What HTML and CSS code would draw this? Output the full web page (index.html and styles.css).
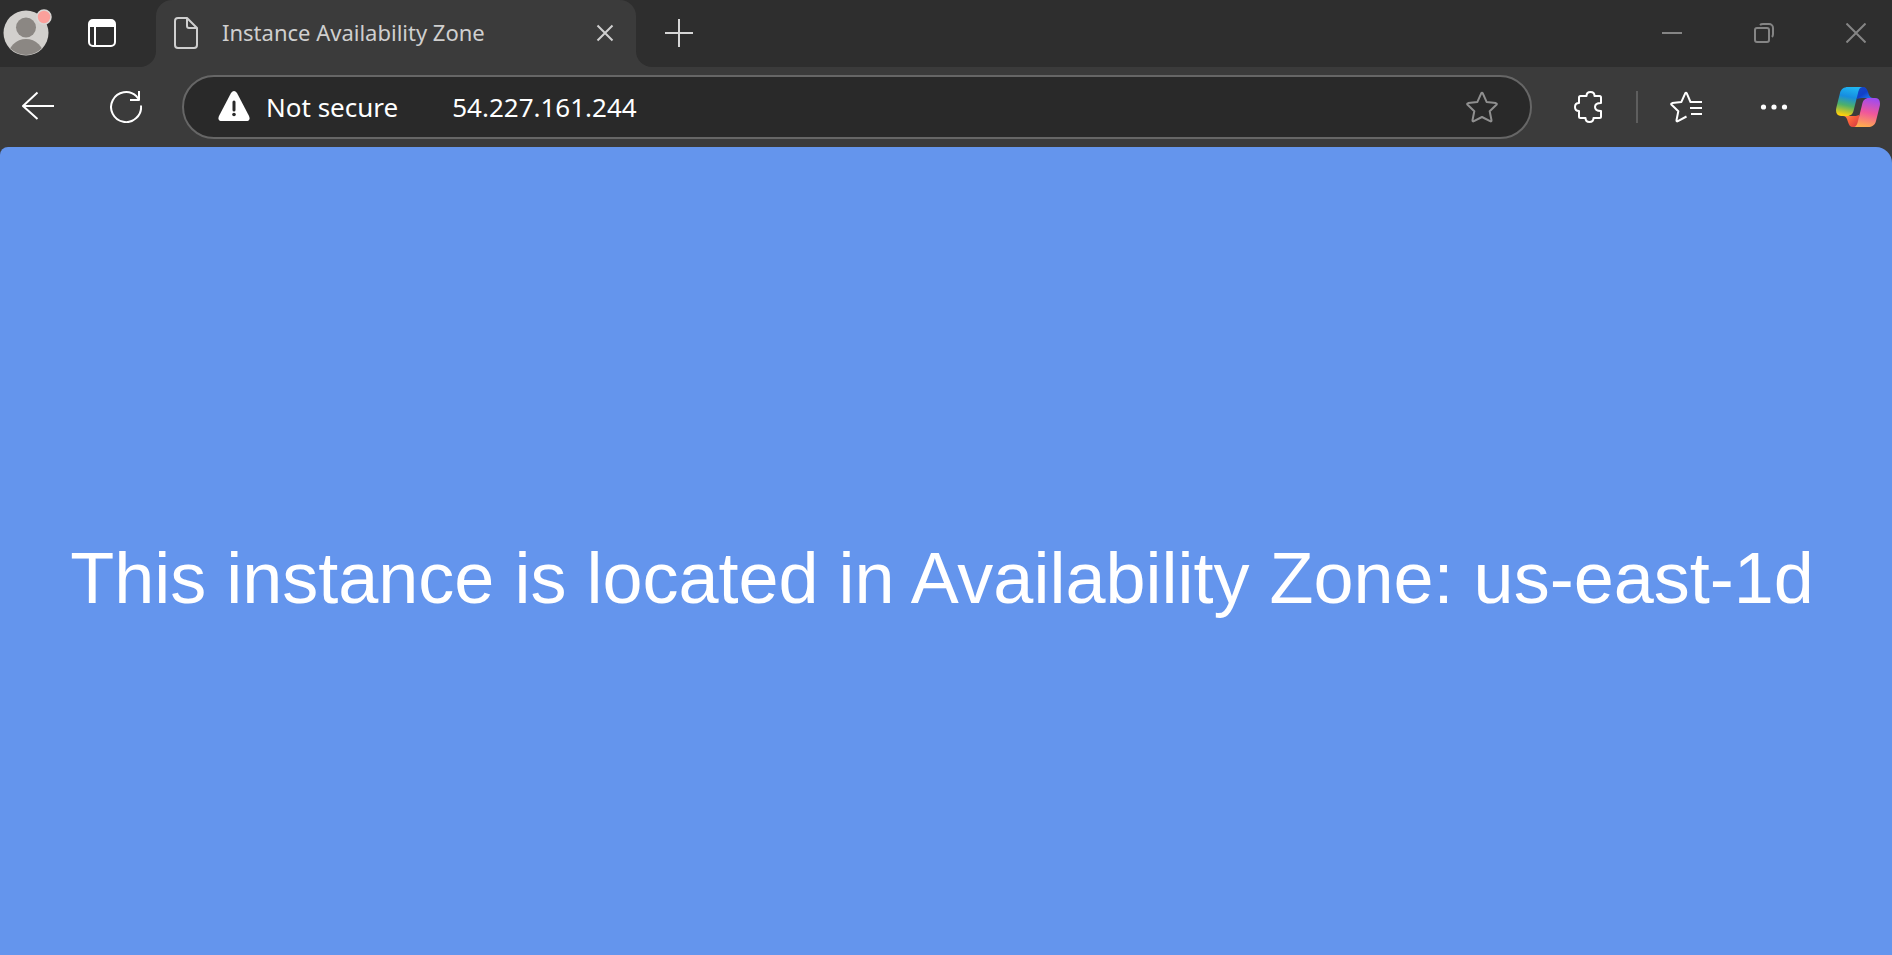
FILE: index.html
```html
<!DOCTYPE html>
<html lang="en">
<head>
<meta charset="utf-8">
<title>Instance Availability Zone</title>
<link rel="stylesheet" href="styles.css">
</head>
<body>
<header class="browser">
  <div class="tab-strip">
    <div class="strip-start">
      <button class="icon-button" aria-label="Profile">
        <svg width="50" height="50" viewBox="0 0 50 50">
          <defs><clipPath id="avatar"><circle cx="23" cy="25" r="22"/></clipPath></defs>
          <circle cx="23" cy="25" r="22.500" fill="#d2d0cd"/>
          <g clip-path="url(#avatar)" fill="#8b8783"><circle cx="23" cy="19.500" r="10"/><circle cx="23" cy="49" r="18"/></g>
          <circle cx="41" cy="9" r="7" fill="#fba09b" stroke="#d9d7d5" stroke-width="1.500"/>
        </svg>
      </button>
      <button class="icon-button" aria-label="Tab actions">
        <svg width="28" height="28" viewBox="0 0 28 28">
          <rect x="1" y="1" width="26" height="26" rx="4" fill="none" stroke="#fff" stroke-width="2"/>
          <path d="M1 8V5a4 4 0 0 1 4-4h18a4 4 0 0 1 4 4v3Z" fill="#fff"/>
          <path d="M7 8v18" stroke="#fff" stroke-width="2"/>
        </svg>
      </button>
    </div>
    <div class="tab-slot">
      <div class="tab">
        <svg class="line-icon" width="24" height="32" viewBox="0 0 24 32"><path d="M13 1H4a3 3 0 0 0-3 3v24a3 3 0 0 0 3 3h16a3 3 0 0 0 3-3V11L13 1v8a2 2 0 0 0 2 2h8"/></svg>
        <span class="tab-title">Instance Availability Zone</span>
        <button class="icon-button" aria-label="Close tab"><svg class="line-icon" width="18" height="18" viewBox="0 0 18 18"><path d="M1.500 1.500l15 15M16.500 1.500l-15 15"/></svg></button>
      </div>
    </div>
    <div class="strip-end">
      <button class="icon-button" aria-label="New tab"><svg class="line-icon new-tab" width="28" height="28" viewBox="0 0 28 28"><path d="M14 0v28M0 14h28"/></svg></button>
      <div class="window-controls">
        <button class="window-button" aria-label="Minimize"><svg class="line-icon" width="20" height="20" viewBox="0 0 20 20"><path d="M0 10h20"/></svg></button>
        <button class="window-button" aria-label="Restore"><svg class="line-icon" width="20" height="20" viewBox="0 0 20 20"><rect x="1" y="5" width="14" height="14" rx="2"/><path d="M6 2q1-1 3-1h6a4 4 0 0 1 4 4v6q0 2-1 3"/></svg></button>
        <button class="window-button" aria-label="Close"><svg class="line-icon" width="20" height="20" viewBox="0 0 20 20"><path d="M.500.500l19 19M19.500.500l-19 19"/></svg></button>
      </div>
    </div>
  </div>
  <div class="toolbar">
    <div class="nav">
      <button class="icon-button" aria-label="Back"><svg class="line-icon" width="32" height="32" viewBox="0 0 32 32"><path d="M15.500 1.500L1 15l14.500 13M1 15h31"/></svg></button>
      <button class="icon-button" aria-label="Refresh"><svg class="line-icon" width="32" height="32" viewBox="0 0 32 32"><path d="M31 14.500A15 15 0 1 1 26.500 5.300L29 8.500M29 0v9h-9"/></svg></button>
    </div>
    <div class="address-bar">
      <button class="security">
        <svg width="32" height="32" viewBox="0 0 32 32"><path d="M13 2q3-4 6 0l12 23q2 5-3 5H4q-5 0-3-5Z" fill="#fff"/><path d="M16 11v8" stroke="#292929" stroke-width="3" stroke-linecap="round"/><circle cx="16" cy="23.500" r="1.800" fill="#292929"/></svg>
        Not secure
      </button>
      <input class="url" type="text" aria-label="Address" value="54.227.161.244">
      <button class="icon-button favorite" aria-label="Add to favorites"><svg class="line-icon" width="32" height="32" viewBox="0 0 32 32"><path d="M15.100 2.600q.900-1.600 1.800 0l3.700 8.300 9.200 1.200q1.700.400.600 1.700l-6.700 6.500 1.800 8.900q.100 1.700-1.400 1L16 26l-8.100 4.200q-1.500.700-1.400-1l1.800-8.900-6.700-6.500q-1.100-1.300.600-1.700l9.200-1.200Z"/></svg></button>
    </div>
    <button class="icon-button" aria-label="Extensions"><svg class="line-icon" width="32" height="32" viewBox="0 0 32 32"><path d="M7 12V6.500A1.500 1.500 0 0 1 8.500 5H14.500q0-4 4-4t4 4h5A1.500 1.500 0 0 1 29 6.500V12q-6 0-6 4t6 4v5.500a1.500 1.500 0 0 1-1.500 1.500H21.500q0 4-4 4t-4-4H8.500A1.500 1.500 0 0 1 7 25.500V20q-4 0-4-4t4-4Z"/></svg></button>
    <div class="tools">
      <span class="divider"></span>
      <button class="icon-button" aria-label="Favorites"><svg class="line-icon" width="32" height="32" viewBox="0 0 32 32"><path d="M32 11H20.500L16.900 2.600q-.900-1.600-1.800 0l-3.700 8.300-9.200 1.200q-1.700.400-.6 1.700l6.700 6.500-1.800 8.900q-.100 1.700 1.400 1L16.500 25.500M20 17h12M21 23h11"/></svg></button>
    </div>
    <div class="menu">
      <button class="icon-button" aria-label="Settings and more"><svg width="32" height="32" viewBox="0 0 32 32" fill="#fff"><circle cx="5.500" cy="16" r="2.600"/><circle cx="16" cy="16" r="2.600"/><circle cx="26.500" cy="16" r="2.600"/></svg></button>
      <button class="icon-button" aria-label="Copilot">
        <svg width="44" height="40" viewBox="0 0 44 40">
          <defs>
            <linearGradient id="sea" x1=".6" y1="0" x2=".4" y2="1"><stop offset="0" stop-color="#20b6f2"/><stop offset=".35" stop-color="#168de0"/><stop offset=".65" stop-color="#4db06a"/><stop offset="1" stop-color="#ffd00b"/></linearGradient>
            <linearGradient id="navy" x1="0" y1="0" x2="1" y2="1"><stop offset="0" stop-color="#1749c4"/><stop offset=".5" stop-color="#1140c8"/><stop offset="1" stop-color="#2087f5"/></linearGradient>
            <linearGradient id="rose" x1=".6" y1="0" x2=".4" y2="1"><stop offset="0" stop-color="#a04bf0"/><stop offset=".5" stop-color="#f0579b"/><stop offset="1" stop-color="#ffae4c"/></linearGradient>
            <linearGradient id="ember" x1="0" y1="0" x2="1" y2=".7"><stop offset="0" stop-color="#ff9b42"/><stop offset=".5" stop-color="#fa603c"/><stop offset="1" stop-color="#d83d42"/></linearGradient>
          </defs>
          <path d="M20 0h7c3 0 4 2 5 5l1 3c1 2 2 3 4 3h-9c-3 0-5 0-7 1Z" fill="url(#navy)"/>
          <path d="M24 40h-7c-3 0-4-2-5-5l-1-3c-1-2-2-3-4-3h9c3 0 5 0 7-1Z" fill="url(#ember)"/>
          <path d="M12 0h15c-3 0-4 2-5 6l-4 16c-1 5-3 7-7 7H5c-4 0-6-3-4.500-9L4 6C5 2 8 0 12 0Z" fill="url(#sea)"/>
          <path d="M32 40H17c3 0 4-2 5-6l4-16c1-5 3-7 7-7h6c4 0 6 3 4.500 9L40 34c-1 4-4 6-8 6Z" fill="url(#rose)"/>
        </svg>
      </button>
    </div>
  </div>
</header>
<main class="page">
  <h1 class="message">This instance is located in Availability Zone: us-east-1d</h1>
</main>
</body>
</html>
```
FILE: styles.css
```css
* { box-sizing: border-box; }

body {
  margin: 0;
  min-height: 100vh;
  display: flex;
  flex-direction: column;
  background: #3b3b3b;
  color: #fff;
  font-family: "Segoe UI", "Noto Sans", "Open Sans", sans-serif;
}

button,
input {
  margin: 0;
  padding: 0;
  border: 0;
  background: none;
  color: inherit;
  font: inherit;
}

svg { display: block; flex: none; }

.line-icon {
  fill: none;
  stroke: currentColor;
  stroke-width: 2;
  stroke-linejoin: round;
}

.icon-button { flex: none; }

.tab-strip {
  display: flex;
  height: 67px;
}

.strip-start {
  display: flex;
  align-items: center;
  gap: 35px;
  width: 156px;
  padding: 0 0 1px 3px;
  background: #2e2e2e;
  border-bottom-right-radius: 16px;
}

.tab-slot {
  width: 480px;
  background: linear-gradient(#2e2e2e 50%, #3b3b3b 50%);
}

.tab {
  display: flex;
  align-items: center;
  height: 100%;
  padding: 0 22px 1px 18px;
  border-radius: 16px 16px 0 0;
  background: #3b3b3b;
  color: #cfcfcf;
}

.tab-title {
  flex: 1;
  margin-left: 24px;
  padding-bottom: 2px;
  font-size: 22px;
  line-height: 32px;
  white-space: nowrap;
}

.strip-end {
  flex: 1;
  display: flex;
  align-items: center;
  justify-content: space-between;
  padding: 0 0 2px 29px;
  background: #2e2e2e;
  border-bottom-left-radius: 16px;
}

.new-tab { color: #d6d6d6; }

.window-controls {
  display: flex;
  gap: 20px;
  color: #858585;
}

.window-button {
  display: flex;
  align-items: center;
  justify-content: center;
  width: 72px;
  height: 64px;
}

.toolbar {
  display: flex;
  align-items: center;
  gap: 40px;
  height: 80px;
  padding: 0 12px 0 22px;
}

.nav { display: flex; gap: 56px; }

.address-bar {
  flex: 1;
  display: flex;
  align-items: center;
  height: 64px;
  padding: 0 32px 0 34px;
  border: 2px solid #666;
  border-radius: 32px;
  background: #292929;
  font-size: 26px;
}

.security {
  display: flex;
  align-items: center;
  gap: 16px;
  margin-right: 54px;
  white-space: nowrap;
}

.url { flex: 1; min-width: 0; outline: 0; }

.favorite { color: #8f8f8f; }

.tools {
  display: flex;
  align-items: center;
  gap: 32px;
  margin-left: -8px;
}

.divider {
  width: 2px;
  height: 32px;
  background: #5e5e5e;
}

.menu {
  display: flex;
  align-items: center;
  gap: 46px;
  margin-left: 16px;
}

.page {
  flex: 1;
  display: flex;
  align-items: center;
  justify-content: center;
  padding: 54px 8px 0 0;
  border-radius: 8px 16px 0 0;
  background: #6495ed;
}

.message {
  margin: 0;
  font-family: "Liberation Sans", Arial, sans-serif;
  font-size: 72px;
  font-weight: 400;
  text-align: center;
}
```
